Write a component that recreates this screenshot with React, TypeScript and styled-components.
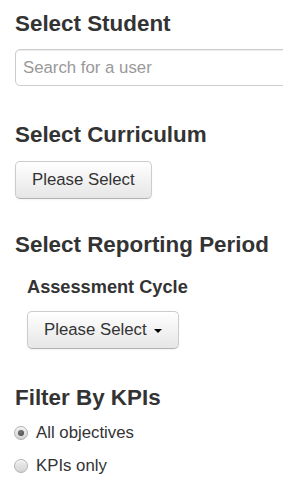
import React, { useState } from 'react';
import styled, { createGlobalStyle } from 'styled-components';

const GlobalStyle = createGlobalStyle`
    html, body {
        margin: 0;
        padding: 0;
        background: #fff;
        overflow-x: hidden;
    }
    body {
        font-family: 'Liberation Sans', Arial, sans-serif;
        color: #333;
    }
`;

const Page = styled.div`
    display: flex;
    flex-direction: column;
    padding: 12px 0 0 15px;
    width: 283px;
    box-sizing: border-box;
    overflow: hidden;
`;

const Heading = styled.h3<{ $top: number }>`
    margin: ${(p) => p.$top}px 0 0 0;
    font-size: 22.4px;
    line-height: 24px;
    font-weight: bold;
    color: #333;
`;

const SubHeading = styled.h4`
    margin: 20px 0 0 12px;
    font-size: 18.2px;
    line-height: 20px;
    font-weight: bold;
    color: #333;
`;

const SearchInput = styled.input`
    margin: 13px 0 0 0;
    width: 290px;
    height: 37px;
    box-sizing: border-box;
    padding: 0 7px;
    border: 1px solid #ccc;
    border-radius: 5px;
    box-shadow: inset 0 1px 1px rgba(0, 0, 0, 0.075);
    font-family: 'Liberation Sans', Arial, sans-serif;
    font-size: 16.8px;
    color: #555;
    outline: none;

    &::placeholder {
        color: #999;
    }
`;

const ButtonRow = styled.div<{ $indent?: number }>`
    display: flex;
    margin: 14px 0 0 ${(p) => p.$indent || 0}px;
`;

const Button = styled.button`
    display: inline-flex;
    align-items: center;
    height: 38px;
    box-sizing: border-box;
    padding: 0 16px;
    border: 1px solid #ccc;
    border-bottom-color: #b3b3b3;
    border-radius: 5px;
    background: linear-gradient(to bottom, #ffffff, #e6e6e6);
    box-shadow: inset 0 1px 0 rgba(255, 255, 255, 0.2), 0 1px 2px rgba(0, 0, 0, 0.05);
    font-family: 'Liberation Sans', Arial, sans-serif;
    font-size: 16.8px;
    color: #333;
    cursor: pointer;
`;

const Caret = styled.span`
    display: inline-block;
    width: 0;
    height: 0;
    margin: 2px 0 0 7px;
    border-top: 4px solid #000;
    border-left: 4px solid transparent;
    border-right: 4px solid transparent;
`;

const RadioList = styled.div`
    display: flex;
    flex-direction: column;
    margin-top: 6px;
`;

const RadioRow = styled.label`
    display: flex;
    align-items: center;
    height: 33px;
    font-size: 16.8px;
    color: #333;
    cursor: pointer;
`;

const Radio = styled.input`
    appearance: none;
    -webkit-appearance: none;
    margin: 0 8px 0 -1px;
    width: 14px;
    height: 14px;
    border-radius: 50%;
    border: 1px solid #b0b0b0;
    background: linear-gradient(to bottom, #eeeeee, #d4d4d4);
    box-shadow: inset 0 1px 1px rgba(255, 255, 255, 0.8);
    box-sizing: border-box;
    display: grid;
    place-items: center;

    &:checked::after {
        content: '';
        width: 6px;
        height: 6px;
        border-radius: 50%;
        background: radial-gradient(circle at 40% 35%, #777, #444);
    }
`;

export default function App() {
    const [filter, setFilter] = useState<'all' | 'kpi'>('all');

    return (
        <>
            <GlobalStyle />
            <Page>
                <Heading $top={0}>Select Student</Heading>
                <SearchInput placeholder="Search for a user" />

                <Heading $top={37}>Select Curriculum</Heading>
                <ButtonRow>
                    <Button>Please Select</Button>
                </ButtonRow>

                <Heading $top={34}>Select Reporting Period</Heading>
                <SubHeading>Assessment Cycle</SubHeading>
                <ButtonRow $indent={12}>
                    <Button>
                        Please Select
                        <Caret />
                    </Button>
                </ButtonRow>

                <Heading $top={37}>Filter By KPIs</Heading>
                <RadioList>
                    <RadioRow>
                        <Radio
                            type="radio"
                            name="kpi"
                            checked={filter === 'all'}
                            onChange={() => setFilter('all')}
                        />
                        All objectives
                    </RadioRow>
                    <RadioRow>
                        <Radio
                            type="radio"
                            name="kpi"
                            checked={filter === 'kpi'}
                            onChange={() => setFilter('kpi')}
                        />
                        KPIs only
                    </RadioRow>
                </RadioList>
            </Page>
        </>
    );
}
